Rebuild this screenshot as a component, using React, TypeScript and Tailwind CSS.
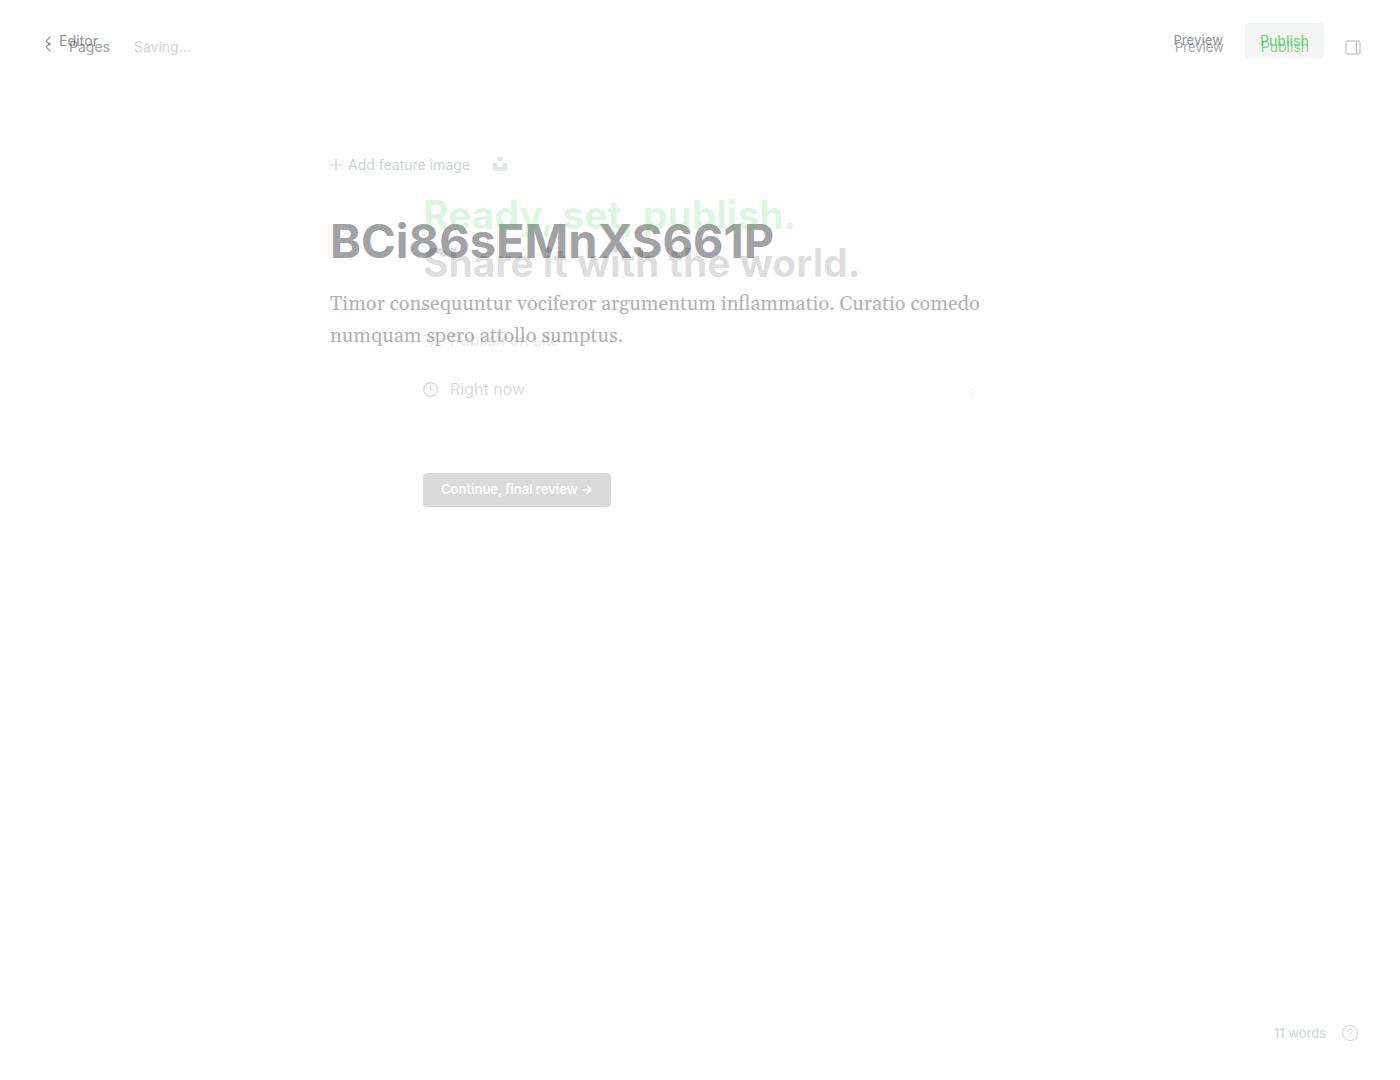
function ChevronLeft() {
  return (
    <svg width="6" height="10" viewBox="0 0 6 10" fill="none" stroke="currentColor" strokeWidth="1.2" strokeLinecap="round" strokeLinejoin="round">
      <path d="M5 1 1 5l4 4" />
    </svg>
  );
}

function Editor() {
  return (
    <div className="flex min-h-screen flex-col">
      <header className="flex h-[94px] items-center justify-between pr-[39px] pl-[45px] text-sm">
        <div className="flex items-center">
          <a href="#pages" className="flex items-center gap-[18px] text-[#9a9fa4]">
            <ChevronLeft />
            Pages
          </a>
          <span className="ml-6 text-[#ced4d9]">Saving...</span>
        </div>
        <div className="flex items-center">
          <button className="text-[13px] text-[#a3a8ad]">Preview</button>
          <button className="ml-[37px] text-[#83da90]">Publish</button>
          <button aria-label="Settings" className="ml-9 text-[#b4b8bb]">
            <svg width="16" height="16" viewBox="0 0 16 16" fill="none" stroke="currentColor">
              <rect x="1" y="2" width="14" height="13" rx="1" />
              <path d="M11.5 2v13" />
            </svg>
          </button>
        </div>
      </header>

      <main className="mx-auto mt-[61px] w-full max-w-[740px] flex-1">
        <div className="flex h-5 items-center text-sm text-[#ced4d9]">
          <button className="flex items-center gap-[6px]">
            <svg width="12" height="12" viewBox="0 0 12 12" fill="none" stroke="currentColor" strokeWidth="1.2">
              <path d="M6 0v12M0 6h12" />
            </svg>
            Add feature image
          </button>
          <button aria-label="Unsplash" className="ml-[23px] text-[#e2e6e9]">
            <svg width="14" height="16" viewBox="0 0 14 16" fill="currentColor">
              <path d="M4.5 0h5v4h-5zM0 6h4.5v4h5V6H14v8H0z" />
            </svg>
          </button>
        </div>
        <h1 className="mt-9 text-[47px] leading-[60px] font-bold text-[#a1a2a4]">BCi86sEMnXS661P</h1>
        <p className="mt-[17px] font-[Georgia,Gelasio,'Liberation_Serif',serif] text-xl leading-8 text-[#b1b3b6]">
          Timor consequuntur vociferor argumentum inflammatio. Curatio comedo numquam spero attollo sumptus.
        </p>
      </main>

      <footer className="flex items-center justify-end gap-4 pr-[42px] pb-[38px] text-[13px] leading-[18px] text-[#ced4d9]">
        <span>11 words</span>
        <button aria-label="Help">
          <svg width="16" height="16" viewBox="0 0 16 16" fill="none" stroke="currentColor" strokeLinecap="round">
            <circle cx="8" cy="8" r="7.5" />
            <path d="M5.8 6.3a2.2 2.2 0 1 1 3.1 2c-.6.3-.9.6-.9 1.2M8 11.5v.2" />
          </svg>
        </button>
      </footer>
    </div>
  );
}

function PublishOverlay() {
  return (
    <div role="dialog" aria-label="Publish" className="absolute inset-0 flex flex-col">
      <header className="flex h-[81px] items-center justify-between pr-[76px] pl-[45px] text-sm font-medium">
        <a href="#editor" className="flex items-center gap-2 text-[#15171a]/45">
          <ChevronLeft />
          Editor
        </a>
        <div className="flex items-center gap-[22px]">
          <button className="text-[13px] text-[#15171a]/45">Preview</button>
          <button className="h-[35px] rounded bg-[#aab9b5]/12 px-[15px] text-[#30cf43]/70">Publish</button>
        </div>
      </header>

      <div className="mx-auto mt-[110px] w-full max-w-[554px]">
        <h2 className="text-[39px] leading-[48px] font-bold text-black/14">
          <span className="text-[#30cf43]/16">Ready, set, publish.</span>
          <br />
          Share it with the world.
        </h2>
        <div className="mt-[29px] flex h-[49px] items-center gap-3 border-b border-black/1 text-base text-black/10">
          <svg width="15" height="15" viewBox="0 0 16 16" fill="none" stroke="currentColor" strokeLinejoin="round">
            <path d="M1 2 15 1 9 15 6.500 8.500zM6.500 8.500 15 1" />
          </svg>
          Publish on site
        </div>
        <button className="flex h-12 w-full items-center gap-3 text-left text-base text-black/16">
          <svg width="15" height="15" viewBox="0 0 15 15" fill="none" stroke="currentColor" strokeWidth="1.2" strokeLinecap="round">
            <circle cx="7.500" cy="7.500" r="6.800" />
            <path d="M7.500 4v4H10" />
          </svg>
          Right now
          <svg className="mt-2 ml-auto mr-px text-black/6" width="8" height="6" viewBox="0 0 8 6" fill="none" stroke="currentColor">
            <path d="m0 1 4 4 4-4" />
          </svg>
        </button>
        <button className="mt-[60px] h-[34px] rounded bg-black/14 px-[18px] text-[13px] font-semibold text-white/90">
          Continue, final review →
        </button>
      </div>
    </div>
  );
}

export default function App() {
  return (
    <div className="relative min-h-screen bg-[#fefefe] font-[Inter,sans-serif]">
      <Editor />
      <PublishOverlay />
    </div>
  );
}
